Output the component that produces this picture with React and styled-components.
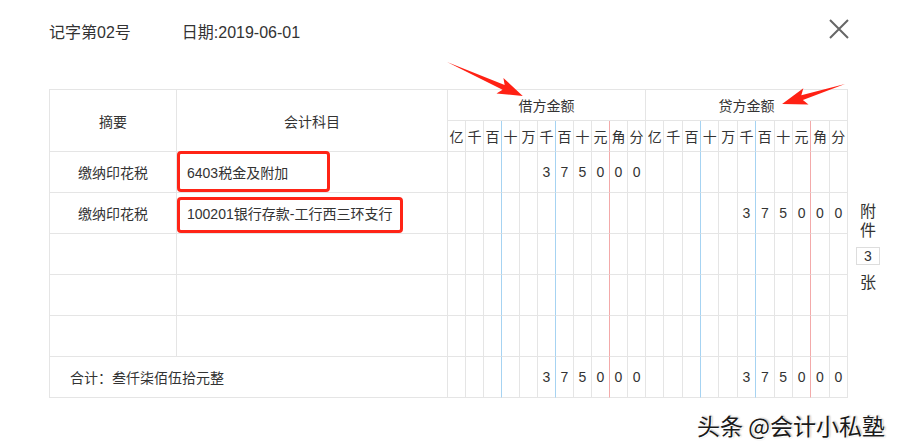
import styled, { createGlobalStyle } from "styled-components";

const GlobalStyle = createGlobalStyle`
  html, body {
    margin: 0;
    padding: 0;
    background: #fff;
  }
  body {
    font-family: "Liberation Sans", "Noto Sans CJK SC", sans-serif;
    color: #333;
  }
`;

const GRID = "#e5e5e5";
const BLUE = "#a6d3f2";
const RED = "#f3aaaa";

const Page = styled.div`
  position: relative;
  width: 897px;
  height: 448px;
  overflow: hidden;
`;

const Header = styled.div`
  display: flex;
  align-items: center;
  height: 62px;
  padding: 0 48px 0 49px;
  box-sizing: border-box;
  font-size: 16px;
  gap: 51px;
`;

const Close = styled.button`
  margin-left: auto;
  margin-bottom: 5px;
  width: 20px;
  height: 20px;
  padding: 0;
  border: 0;
  background: none;
  cursor: pointer;
  display: flex;
`;

const Body = styled.div`
  display: flex;
  align-items: flex-start;
  padding-left: 49px;
  margin-top: 27px;
`;

const Voucher = styled.table`
  width: 799px;
  table-layout: fixed;
  border-collapse: separate;
  border-spacing: 0;
  border-top: 1px solid ${GRID};
  border-left: 1px solid ${GRID};
  font-size: 14px;
`;

const Col = styled.col`
  width: ${(p) => p.$w}px;
`;

const Row = styled.tr`
  height: ${(p) => p.$h}px;
`;

const Cell = styled.td`
  padding: 0;
  border-right: 1px solid ${(p) => p.$line || GRID};
  border-bottom: 1px solid ${GRID};
  text-align: center;
  font-weight: normal;
  white-space: nowrap;
  overflow: visible;
`;

const AccountCell = styled(Cell)`
  position: relative;
  text-align: left;
  padding-left: 10px;
`;

const TotalCell = styled(Cell)`
  text-align: left;
  padding-left: 20px;
  text-spacing-trim: space-all;
`;

const Mark = styled.span`
  position: absolute;
  left: 0;
  top: ${(p) => p.$top}px;
  width: ${(p) => p.$w}px;
  height: ${(p) => p.$h}px;
  box-sizing: border-box;
  border: 3px solid #ff2416;
  border-radius: 4px;
  pointer-events: none;
`;

const Side = styled.div`
  display: flex;
  flex-direction: column;
  align-items: center;
  width: 24px;
  margin-left: 8px;
  margin-top: 113px;
  font-size: 16px;
  line-height: 19px;
`;

const CountBox = styled.div`
  width: 22px;
  height: 16px;
  margin: 7px 0 8px;
  border: 1px solid #ddd;
  font-size: 14px;
  line-height: 16px;
  text-align: center;
`;

const Footer = styled.div`
  display: flex;
  justify-content: flex-end;
  padding-right: 12px;
  margin-top: 12px;
`;

const Watermark = styled.span`
  font-family: "Noto Sans CJK SC", sans-serif;
  font-size: 23px;
  line-height: 30px;
  color: #1a1a1a;
  text-shadow: 1px 1px 0 #fff, -1px -1px 0 #fff, 1px 0 2px #888;
`;

const Overlay = styled.svg`
  position: absolute;
  left: 0;
  top: 0;
  pointer-events: none;
`;

const units = ["亿", "千", "百", "十", "万", "千", "百", "十", "元", "角", "分"];

const lineColor = (i) => (i === 2 || i === 5 ? BLUE : i === 8 ? RED : GRID);

const entries = [
  { summary: "缴纳印花税", account: "6403税金及附加", debit: "375000", credit: "", mark: { top: -1, w: 153, h: 41 } },
  { summary: "缴纳印花税", account: "100201银行存款-工行西三环支行", debit: "", credit: "375000", mark: { top: 4, w: 226, h: 36 } },
  { summary: "", account: "", debit: "", credit: "" },
  { summary: "", account: "", debit: "", credit: "" },
  { summary: "", account: "", debit: "", credit: "" },
];

function Digits({ value }) {
  const chars = value.padStart(11, " ").split("");
  return chars.map((c, i) => (
    <Cell key={i} $line={lineColor(i)}>
      {c.trim()}
    </Cell>
  ));
}

function Arrow({ x, y, angle, length }) {
  const L = length;
  const pts = [
    [0, 0],
    [L - 21, -2.6],
    [L - 25, -8.5],
    [L, 0],
    [L - 25, 8.5],
    [L - 21, 2.6],
  ]
    .map((p) => p.join(","))
    .join(" ");
  return <polygon points={pts} fill="#ff2114" transform={`translate(${x} ${y}) rotate(${angle})`} />;
}

export default function App() {
  return (
    <Page>
      <GlobalStyle />
      <Header>
        <span>记字第02号</span>
        <span>日期:2019-06-01</span>
        <Close aria-label="关闭">
          <svg width="20" height="20" viewBox="0 0 20 20">
            <path d="M1 1 L19 19 M19 1 L1 19" stroke="#666" strokeWidth="2" />
          </svg>
        </Close>
      </Header>

      <Body>
        <Voucher>
          <colgroup>
            <Col $w={127} />
            <Col $w={271} />
            {units.map((u, i) => (
              <Col key={i} $w={18} />
            ))}
          </colgroup>
          <thead>
            <Row $h={31}>
              <Cell as="th" rowSpan={2}>摘要</Cell>
              <Cell as="th" rowSpan={2}>会计科目</Cell>
              <Cell as="th" colSpan={11}>借方金额</Cell>
              <Cell as="th" colSpan={11}>贷方金额</Cell>
            </Row>
            <Row $h={31}>
              {[...units, ...units].map((u, i) => (
                <Cell as="th" key={i} $line={lineColor(i % 11)}>
                  {u}
                </Cell>
              ))}
            </Row>
          </thead>
          <tbody>
            {entries.map((e, r) => (
              <Row $h={41} key={r}>
                <Cell>{e.summary}</Cell>
                <AccountCell>
                  {e.account}
                  {e.mark && <Mark $top={e.mark.top} $w={e.mark.w} $h={e.mark.h} />}
                </AccountCell>
                <Digits value={e.debit} />
                <Digits value={e.credit} />
              </Row>
            ))}
            <Row $h={41}>
              <TotalCell colSpan={2}>合计：叁仟柒佰伍拾元整</TotalCell>
              <Digits value="375000" />
              <Digits value="375000" />
            </Row>
          </tbody>
        </Voucher>

        <Side>
          <span>附</span>
          <span>件</span>
          <CountBox>3</CountBox>
          <span>张</span>
        </Side>
      </Body>

      <Footer>
        <Watermark>头条 @会计小私塾</Watermark>
      </Footer>

      <Overlay width="897" height="448">
        <Arrow x={447} y={62} angle={24.1} length={83} />
        <Arrow x={845} y={84} angle={162.4} length={66} />
      </Overlay>
    </Page>
  );
}
